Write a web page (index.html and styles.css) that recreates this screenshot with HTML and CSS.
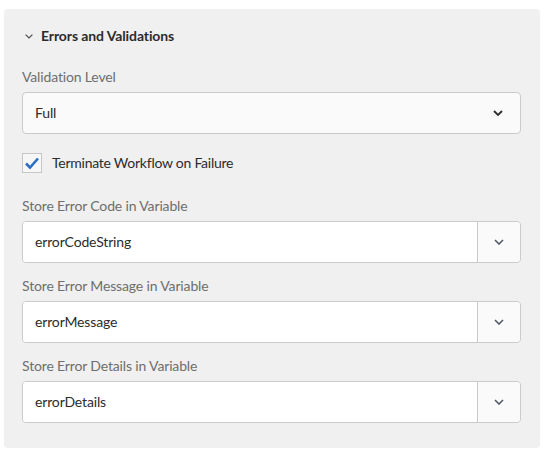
FILE: index.html
```html
<!DOCTYPE html>
<html>
<head>
<meta charset="utf-8">
<link rel="stylesheet" href="styles.css">
</head>
<body>
<div class="panel">
  <div class="header">
    <svg class="hchev" width="8" height="5" viewBox="0 0 8 5"><path d="M0.6 0.6 L4 4 L7.4 0.6" fill="none" stroke="#4b4b4b" stroke-width="1.2"/></svg>
    <span class="title">Errors and Validations</span>
  </div>

  <div class="label first">Validation Level</div>
  <div class="select">
    <span class="value">Full</span>
    <svg class="chev" width="10" height="6" viewBox="0 0 10 6"><path d="M1 1 L5 5 L9 1" fill="none" stroke="#2c2c2c" stroke-width="1.8"/></svg>
  </div>

  <div class="check-row">
    <span class="box">
      <svg width="16" height="14" viewBox="0 0 16 14"><path d="M2 7.5 L6 11.5 L14 2.5" fill="none" stroke="#2d6fc4" stroke-width="2.6" stroke-linejoin="miter"/></svg>
    </span>
    <span class="check-label">Terminate Workflow on Failure</span>
  </div>

  <div class="label l2">Store Error Code in Variable</div>
  <div class="combo">
    <span class="input">errorCodeString</span>
    <span class="btn"><svg width="10" height="6" viewBox="0 0 10 6"><path d="M1 1 L5 5 L9 1" fill="none" stroke="#505a66" stroke-width="1.6"/></svg></span>
  </div>

  <div class="label">Store Error Message in Variable</div>
  <div class="combo">
    <span class="input">errorMessage</span>
    <span class="btn"><svg width="10" height="6" viewBox="0 0 10 6"><path d="M1 1 L5 5 L9 1" fill="none" stroke="#505a66" stroke-width="1.6"/></svg></span>
  </div>

  <div class="label">Store Error Details in Variable</div>
  <div class="combo">
    <span class="input">errorDetails</span>
    <span class="btn"><svg width="10" height="6" viewBox="0 0 10 6"><path d="M1 1 L5 5 L9 1" fill="none" stroke="#505a66" stroke-width="1.6"/></svg></span>
  </div>
</div>
</body>
</html>
```
FILE: styles.css
```css
html, body {
  margin: 0;
  padding: 0;
  background: #ffffff;
}
body {
  font-family: Lato, "Open Sans", sans-serif;
  font-size: 14px;
  line-height: 20px;
  letter-spacing: -0.15px;
  color: #2c2c2c;
  padding: 9px 0 0 4px;
}
.panel {
  width: 536px;
  height: 439px;
  box-sizing: border-box;
  background: #f0f0f0;
  border-radius: 4px;
  padding: 17px 19px 25px 18px;
  display: flex;
  flex-direction: column;
}
.header {
  display: flex;
  align-items: center;
  height: 20px;
}
.hchev {
  margin-left: 3px;
  margin-right: 8px;
}
.title {
  font-weight: 700;
  color: #2c2c2c;
  letter-spacing: -0.1px;
}
.label {
  color: #6e6e6e;
  margin-top: 13px;
  margin-bottom: 5px;
}
.label.first {
  margin-top: 21px;
}
.label.l2 {
  margin-top: 23px;
}
.select {
  height: 42px;
  box-sizing: border-box;
  background: #fafafa;
  border: 1px solid #cacaca;
  border-radius: 4px;
  display: flex;
  align-items: center;
  justify-content: space-between;
  padding: 0 17px 0 12px;
}
.check-row {
  display: flex;
  align-items: center;
  margin-top: 19px;
  height: 20px;
}
.check-label {
  letter-spacing: -0.25px;
}
.box {
  width: 20px;
  height: 20px;
  box-sizing: border-box;
  border: 1px solid #c6c6c6;
  background: #f7f7f7;
  display: flex;
  align-items: center;
  justify-content: center;
  margin-right: 10px;
}
.combo {
  height: 42px;
  box-sizing: border-box;
  border: 1px solid #cacaca;
  border-radius: 4px;
  display: flex;
  overflow: hidden;
}
.input {
  flex: 1;
  background: #ffffff;
  display: flex;
  align-items: center;
  padding-left: 12px;
}
.btn {
  width: 42px;
  border-left: 1px solid #cacaca;
  background: #fafafa;
  display: flex;
  align-items: center;
  justify-content: center;
}
```
